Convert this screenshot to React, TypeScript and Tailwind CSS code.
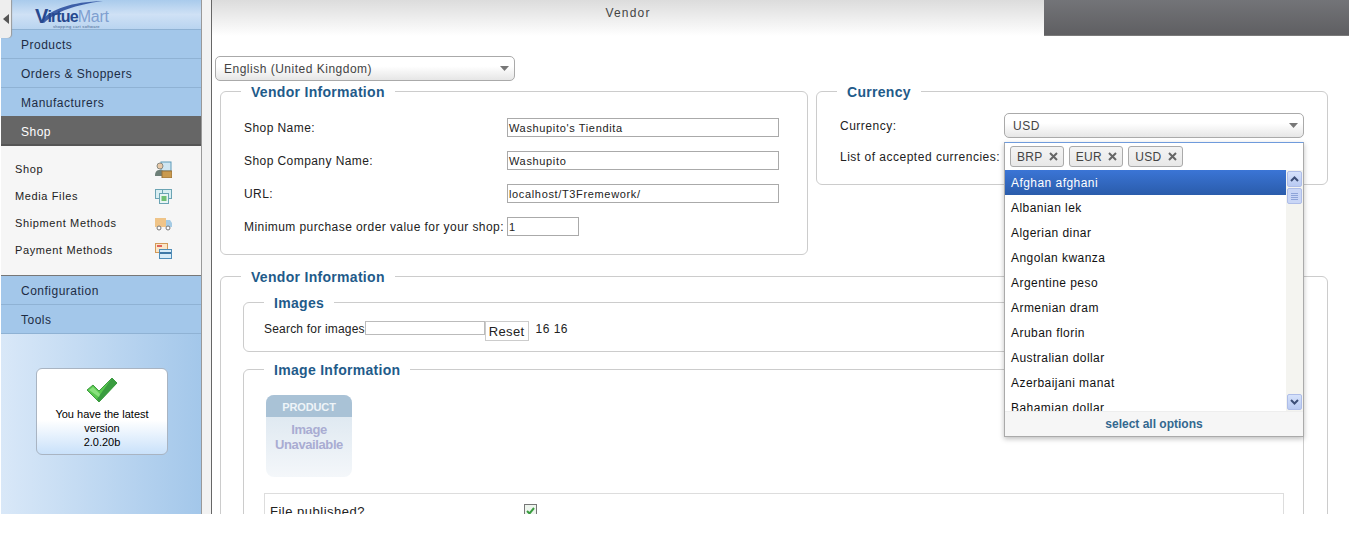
import type { ReactNode } from "react"

const FONT = "font-['Liberation_Sans',Arial,sans-serif]"

const TOP_MENU = ["Products", "Orders & Shoppers", "Manufacturers"]
const BOTTOM_MENU = ["Configuration", "Tools"]
const CURRENCIES = [
  "Afghan afghani",
  "Albanian lek",
  "Algerian dinar",
  "Angolan kwanza",
  "Argentine peso",
  "Armenian dram",
  "Aruban florin",
  "Australian dollar",
  "Azerbaijani manat",
  "Bahamian dollar",
]

function ShopIcon() {
  return (
    <svg width="17" height="17" viewBox="0 0 17 17">
      <rect x="6" y="1" width="10" height="9" fill="#cfe6f2" stroke="#5d9ab8" />
      <circle cx="5" cy="5" r="3" fill="#e8c9a8" stroke="#8a8a80" />
      <path d="M0 15c0-5 2-6 5-6s4 1 4 3v3z" fill="#6d7f78" />
      <rect x="7" y="10" width="10" height="7" fill="#c99a4e" stroke="#96703a" />
    </svg>
  )
}

function MediaIcon() {
  return (
    <svg width="17" height="17" viewBox="0 0 17 17">
      <rect x="0.5" y="1.500" width="9" height="9" fill="#d9eef2" stroke="#6ba4b4" />
      <rect x="7.5" y="1.500" width="9" height="9" fill="#d9eef2" stroke="#6ba4b4" />
      <rect x="4.5" y="5.500" width="9" height="10" fill="#e8f4f4" stroke="#6ba4b4" />
      <rect x="6.5" y="8" width="5" height="5" fill="#6fbf73" />
    </svg>
  )
}

function TruckIcon() {
  return (
    <svg width="17" height="17" viewBox="0 0 17 17">
      <rect x="0" y="3" width="11" height="9" fill="#efc488" />
      <path d="M11 5h4l2 3v4h-6z" fill="#a5cbe4" />
      <circle cx="4" cy="13" r="2" fill="#fff" stroke="#777" />
      <circle cx="13" cy="13" r="2" fill="#fff" stroke="#777" />
    </svg>
  )
}

function PaymentIcon() {
  return (
    <svg width="17" height="17" viewBox="0 0 17 17">
      <rect x="0.5" y="1.500" width="12" height="9" fill="#fbe6c8" stroke="#d49a58" />
      <rect x="2" y="3" width="5" height="2" fill="#e0645a" />
      <rect x="4.5" y="7.500" width="12" height="9" fill="#d8ecf8" stroke="#4f8db8" />
      <rect x="5" y="10" width="11" height="2" fill="#3f78a6" />
    </svg>
  )
}

function CheckIcon() {
  return (
    <svg width="32" height="26" viewBox="0 0 32 26">
      <path d="M1 13 7 8l6 6L26 1l5 5-18 19z" fill="#58c84e" stroke="#3f9a42" strokeWidth="1" />
      <path d="M26 1l5 5-18 19-2-3z" fill="#3a9c40" />
      <path d="M3 13l4-3 6 6 1 1-1 3z" fill="#8ae07e" />
    </svg>
  )
}

function Arrow() {
  return (
    <svg width="9" height="5" viewBox="0 0 9 5">
      <path d="M0 0h9L4.500 5z" fill="#777" />
    </svg>
  )
}

function Logo() {
  return (
    <div className="relative mt-[7px] ml-[34px] w-[74px] leading-none">
      <svg className="absolute top-[-6px] left-[2px]" width="70" height="24" viewBox="0 0 70 24">
        <path d="M4 20C14 8 34 1 66 0 38 4 20 10 7 22z" fill="#3d5fa8" />
      </svg>
      <div className="relative flex h-[18px] items-end text-[16px] leading-[16px] font-bold tracking-[-0.9px] whitespace-nowrap text-[#27498f]">
        <span className="text-[20px] leading-[18px]">V</span>
        <span>irtue</span>
        <span className="font-normal tracking-[-0.2px] text-[#7f9fd0]">Mart</span>
      </div>
      <div className="pl-[18px] text-[4px] leading-[3px] tracking-[0.3px] whitespace-nowrap text-[#44638f]">shopping cart software</div>
    </div>
  )
}

function Select({ label, className }: { label: string; className: string }) {
  return (
    <div
      className={`flex h-[25px] w-[300px] items-center justify-between rounded-[5px] border border-[#aaa] bg-gradient-to-b from-[#fff] from-40% to-[#e6e6e6] pl-2 pr-[5px] text-[12px] tracking-[0.5px] text-[#444] ${className}`}
    >
      <span>{label}</span>
      <Arrow />
    </div>
  )
}

function Group({
  title,
  className,
  legendClass,
  children,
}: {
  title: string
  className: string
  legendClass: string
  children: ReactNode
}) {
  return (
    <fieldset className={`rounded-[6px] border border-[#ccc] ${className}`}>
      <legend className={`px-[10px] pt-[2px] text-[14px] leading-[16px] font-bold tracking-[0.3px] text-[#1f5b8a] ${legendClass}`}>
        {title}
      </legend>
      {children}
    </fieldset>
  )
}

function FormRow({ label, value, inputClass }: { label: string; value: string; inputClass: string }) {
  return (
    <div className="flex h-[33px] items-center tracking-[0.43px]">
      <span className="w-[263px] shrink-0 whitespace-nowrap">{label}</span>
      <span className={`flex h-[19px] items-center border border-[#aaa] pt-[2px] pl-[1px] text-[11px] leading-[15px] tracking-[0.65px] ${inputClass}`}>
        {value}
      </span>
    </div>
  )
}

function ScrollArrow({ d }: { d: string }) {
  return (
    <div className="flex h-[16px] w-[15px] items-center justify-center rounded-[2px] border border-[#aebde8] bg-gradient-to-b from-[#d6e2fb] to-[#b9caf2]">
      <svg width="9" height="6" viewBox="0 0 9 6">
        <path d={d} fill="none" stroke="#3d4f78" strokeWidth="2" />
      </svg>
    </div>
  )
}

function Tag({ label }: { label: string }) {
  return (
    <span className="flex h-[21px] items-center gap-[6px] rounded-[3px] border border-[#aaa] bg-gradient-to-b from-[#f4f4f4] to-[#e8e8e8] pl-[6px] pr-[5px] text-[12px] tracking-[0.35px] text-[#444]">
      {label}
      <svg width="9" height="9" viewBox="0 0 9 9">
        <path d="M1 1l7 7M8 1 1 8" stroke="#666" strokeWidth="2" />
      </svg>
    </span>
  )
}

export default function App() {
  return (
    <div className={`${FONT} relative flex h-[514px] w-[1349px] overflow-hidden bg-white text-[12px] tracking-[0.5px] text-[#222]`}>
      {/* Menu stanga */}
      <aside className="relative ml-[1px] flex w-[200px] shrink-0 flex-col bg-gradient-to-r from-[#d9e8f8] to-[#a3c7ea]">
        <div className="flex h-[30px] items-start border-b border-[#8fb2d4] bg-gradient-to-b from-[#a9cbec] via-[#cfe1f5] to-[#b9d4f0]">
          <Logo />
        </div>
        {TOP_MENU.map((item) => (
          <div key={item} className="flex h-[29px] items-center border-b border-[#8fb2d4] bg-[#a3c7ea] pt-[1px] pl-[20px] text-[#1d2c44]">
            {item}
          </div>
        ))}
        <div className="mt-[-1px] flex h-[30px] items-center border-b-2 border-[#555] bg-[#666] pt-[3px] pl-[20px] text-white">Shop</div>
        <div className="flex h-[129px] flex-col bg-[#f6f6f6] pt-[10px] text-[11px] tracking-[0.62px] text-[#222]">
          {[
            { name: "Shop", icon: <ShopIcon /> },
            { name: "Media Files", icon: <MediaIcon /> },
            { name: "Shipment Methods", icon: <TruckIcon /> },
            { name: "Payment Methods", icon: <PaymentIcon /> },
          ].map((row) => (
            <div key={row.name} className="flex h-[27px] items-center justify-between pl-[14px] pr-[29px]">
              <span>{row.name}</span>
              {row.icon}
            </div>
          ))}
        </div>
        <div className="h-[1px] bg-[#777]" />
        {BOTTOM_MENU.map((item) => (
          <div key={item} className="flex h-[29px] items-center border-b border-[#8fb2d4] bg-[#a3c7ea] pt-[1px] pl-[20px] text-[#1d2c44]">
            {item}
          </div>
        ))}
        <div className="mt-[34px] ml-[35px] flex h-[87px] w-[132px] flex-col items-center rounded-[6px] border border-[#a9b4c2] bg-gradient-to-b from-white from-60% to-[#c9e1fa] pt-[8px] text-center text-[11px] leading-[14px] tracking-[0px] text-black">
          <CheckIcon />
          <span className="mt-[4px] w-[110px]">You have the latest version</span>
          <span>2.0.20b</span>
        </div>
        <div className="absolute top-0 left-[-1px] flex h-[38px] w-[11px] items-center justify-center rounded-br-[4px] bg-[#eee] shadow-[1px_0_1px_#999]">
          <svg width="6" height="10" viewBox="0 0 6 10">
            <path d="M6 0v10L0 5z" fill="#555" />
          </svg>
        </div>
      </aside>
      <div className="w-[1px] shrink-0 bg-[#999]" />
      <div className="w-[9px] shrink-0 bg-[#f2f2f2]" />
      <div className="w-[1px] shrink-0 bg-[#666]" />

      {/* Continut */}
      <main className="relative min-w-0 flex-1">
        <div className="flex h-[36px]">
          <div className="flex h-[36px] w-[832px] justify-center bg-gradient-to-b from-[#dcdcdc] to-white pt-[5px] text-[12px] leading-[16px] tracking-[1.2px] text-[#444]">
            Vendor
          </div>
          <div className="flex-1 border-b border-[#7a7a7a] bg-gradient-to-b from-[#737478] to-[#5f5f62]" />
        </div>
        <Select label="English (United Kingdom)" className="mt-[20px] ml-[3px]" />

        <div className="mt-[1px] ml-[8px] flex w-[1108px] gap-[8px]">
          <Group title="Vendor Information" className="h-[173px] w-[588px] shrink-0 pl-[23px]" legendClass="ml-[-3px]">
            <div className="mt-[11px]">
              <FormRow label="Shop Name:" value="Washupito's Tiendita" inputClass="w-[272px]" />
              <FormRow label="Shop Company Name:" value="Washupito" inputClass="w-[272px]" />
              <FormRow label="URL:" value="localhost/T3Fremework/" inputClass="w-[272px]" />
              <FormRow label="Minimum purchase order value for your shop:" value="1" inputClass="w-[72px]" />
            </div>
          </Group>
          <Group title="Currency" className="h-[103px] flex-1 pl-[23px]" legendClass="ml-[-3px]">
            <div className="flex items-center pt-[13px]">
              <span className="w-[164px] shrink-0">Currency:</span>
              <Select label="USD" className="" />
            </div>
            <div className="mt-[10px]">List of accepted currencies:</div>
          </Group>
        </div>

        <Group title="Vendor Information" className="mt-[12px] ml-[8px] w-[1108px] pl-[22px]" legendClass="ml-[-2px]">
          <Group title="Images" className="mt-[8px] h-[59px] w-[1061px] pl-[20px]" legendClass="ml-[0px]">
            <div className="flex items-start pt-[10px] text-[12px] tracking-[0.2px]">
              <span className="leading-[17px]">Search for images</span>
              <span className="h-[14px] w-[120px] border border-[#bbb]" />
              <span className="h-[20px] border border-[#ccc] px-[3px] text-[13px] leading-[20px] tracking-[0.35px]">Reset</span>
              <span className="ml-[7px] leading-[17px] tracking-[0.5px]">16 16</span>
            </div>
          </Group>
          <Group title="Image Information" className="mt-[8px] h-[210px] w-[1061px] pl-[20px]" legendClass="ml-[0px]">
            <div className="mt-[17px] ml-[2px] flex h-[82px] w-[86px] flex-col items-center rounded-[8px] bg-gradient-to-b from-[#d8e4ee] to-[#f4f7fa] font-bold">
              <div className="flex h-[22px] w-full items-center justify-center rounded-t-[8px] bg-[#a9c2d6] pt-[2px] text-[11px] tracking-[-0.1px] text-[#eef4f8]">PRODUCT</div>
              <div className="mt-[5px] text-center text-[13px] leading-[15px] tracking-[-0.4px] text-[#a9acd2]">
                Image
                <br />
                Unavailable
              </div>
            </div>
            <div className="mt-[16px] flex h-[40px] w-[1020px] items-start border border-[#ddd] pt-[10px] pl-[5px] text-[13px] leading-[16px]">
              <span className="w-[254px]">File published?</span>
              <span className="flex h-[13px] w-[13px] items-center justify-center border border-[#777] bg-[#eef5ee]">
                <svg width="9" height="8" viewBox="0 0 9 8">
                  <path d="M1 4l2.500 2.500L8 1" fill="none" stroke="#3a9c40" strokeWidth="2" />
                </svg>
              </span>
            </div>
          </Group>
        </Group>

        {/* Lista valute deschisa */}
        <div className="absolute top-[142px] left-[792px] flex h-[295px] w-[300px] flex-col border border-[#aaa] border-t-[#6f9bdc] bg-white shadow-[0_2px_5px_rgba(0,0,0,0.25)]">
          <div className="flex h-[27px] shrink-0 items-center gap-[5px] pl-[5px]">
            <Tag label="BRP" />
            <Tag label="EUR" />
            <Tag label="USD" />
          </div>
          <div className="flex h-[241px] shrink-0 overflow-hidden">
            <div className="min-w-0 flex-1 overflow-hidden tracking-[0.45px]">
              {CURRENCIES.map((name, i) => (
                <div
                  key={name}
                  className={
                    i === 0
                      ? "flex h-[25px] items-center bg-gradient-to-b from-[#3b75d6] to-[#2a5cab] pl-[6px] text-white"
                      : "flex h-[25px] items-center pl-[6px] text-[#111]"
                  }
                >
                  {name}
                </div>
              ))}
            </div>
            <div className="flex w-[17px] shrink-0 flex-col items-center justify-between bg-[#f4f4f0] py-[1px]">
              <div className="flex flex-col items-center">
                <ScrollArrow d="M1 5l3.500-3.500L8 5" />
                <div className="mt-[1px] flex h-[16px] w-[15px] flex-col justify-center gap-[1px] rounded-[2px] border border-[#aebde8] bg-[#c9d6f6] px-[3px]">
                  <div className="h-[1px] bg-[#8ea4d8]" />
                  <div className="h-[1px] bg-[#8ea4d8]" />
                  <div className="h-[1px] bg-[#8ea4d8]" />
                  <div className="h-[1px] bg-[#8ea4d8]" />
                </div>
              </div>
              <ScrollArrow d="M1 1l3.500 3.500L8 1" />
            </div>
          </div>
          <div className="flex flex-1 items-center justify-center border-t border-[#eee] bg-[#f6f6f6] font-bold tracking-[0px] text-[#33688f]">
            select all options
          </div>
        </div>
      </main>
    </div>
  )
}
